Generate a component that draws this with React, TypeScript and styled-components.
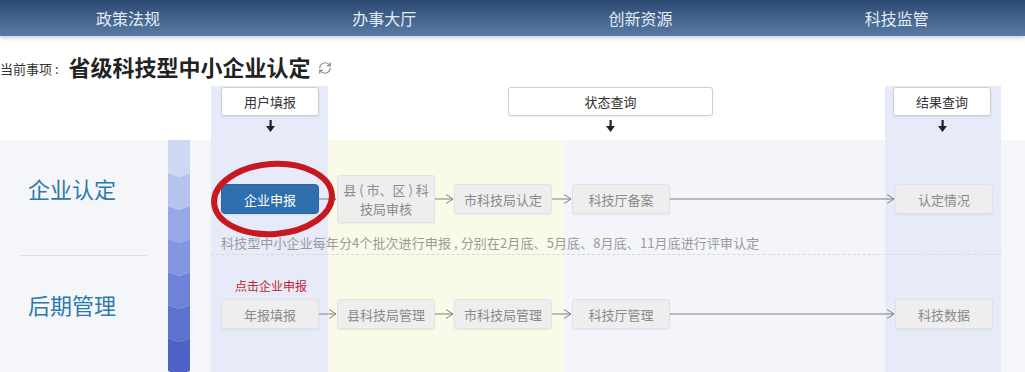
import React from "react"
import styled, { createGlobalStyle } from "styled-components"
import { RefreshCw } from "lucide-react"

const GlobalStyle = createGlobalStyle`
        html, body {
                margin: 0;
                padding: 0;
                background: #ffffff;
        }

        body {
                font-family: "Microsoft YaHei", "Noto Sans CJK SC", "Noto Sans", sans-serif;
                color: #333;
                overflow: hidden;
        }
`;

const Page = styled.div`
        width: 1025px;
        height: 372px;
        overflow: hidden;
`;

const TopBar = styled.nav`
        display: grid;
        grid-template-columns: repeat(4, 1fr);
        height: 36px;
        background: linear-gradient(#2c4a72, #5a7aa5);
        box-shadow: 0 2px 4px rgba(40, 60, 90, 0.25);
        position: relative;
        z-index: 2;
`;

const NavItem = styled.a`
        display: flex;
        align-items: center;
        justify-content: center;
        font-size: 16px;
        color: #e2ebf6;
        text-decoration: none;
`;

const TitleRow = styled.div`
        display: flex;
        align-items: center;
        height: 50px;
        padding-top: 10px;
        box-sizing: border-box;
`;

const TitleLabel = styled.span`
        font-size: 13px;
        color: #333;
        margin-top: 4px;
        white-space: pre;
`;

const Title = styled.h1`
        margin: 0 8px 0 7px;
        font-size: 22px;
        line-height: 26px;
        font-weight: bold;
        color: #222;
`;

const RefreshIcon = styled(RefreshCw)`
        color: #8a8a8a;
        margin-top: 4px;
`;

const HeadRow = styled.div`
        display: grid;
        grid-template-columns: 221px 98px 189px 205px 180px 98px;
        height: 54px;
        background: linear-gradient(to right,
                #ffffff 0 211px,
                #e7eaf8 211px 328px,
                #ffffff 328px 885px,
                #e7eaf8 885px 1001px,
                #ffffff 1001px);
`;

const HeadCell = styled.div<{ $col: number }>`
        grid-column: ${props => props.$col};
        display: flex;
        flex-direction: column;
        align-items: center;
        gap: 4px;
        padding-top: 1px;
`;

const HeadBox = styled.div`
        width: 100%;
        height: 29px;
        box-sizing: border-box;
        display: flex;
        align-items: center;
        justify-content: center;
        background: #fff;
        border: 1px solid #cfcfcf;
        border-radius: 3px;
        box-shadow: 0 1px 2px rgba(0, 0, 0, 0.08);
        font-size: 13px;
        color: #333;
`;

const Body = styled.div`
        display: flex;
        height: 232px;
        background: #f5f6fa;
`;

const Side = styled.aside`
        width: 150px;
        display: flex;
        flex-direction: column;
`;

const SideBlock = styled.div<{ $height: number }>`
        height: ${props => props.$height}px;
        padding: 33px 0 0 28px;
        box-sizing: border-box;
        font-size: 22px;
        line-height: 30px;
        color: #2b7aa8;
`;

const SideDivider = styled.div`
        margin-left: 20px;
        width: 127px;
        height: 1px;
        background: #dde0e7;
`;

const Strip = styled.div`
        margin-left: 18px;
        width: 22px;
        display: flex;
        flex-direction: column;
`;

const Segment = styled.div<{ $color: string; $first?: boolean }>`
        height: 37px;
        margin-bottom: -4px;
        background: ${props => props.$color};
        clip-path: ${props => props.$first
                ? "polygon(0 0, 100% 0, 100% 33px, 50% 37px, 0 33px)"
                : "polygon(0 0, 50% 4px, 100% 0, 100% 33px, 50% 37px, 0 33px)"};
`;

const Flow = styled.div`
        flex: 1;
        display: flex;
        flex-direction: column;
        background: linear-gradient(to right,
                #f5f6fa 0 21px,
                #e7eaf8 21px 138px,
                #fafae9 138px 373px,
                #f4f5fa 373px 695px,
                #e7eaf8 695px 811px,
                #f5f6fa 811px);
`;

const FlowRow = styled.div<{ $height: number; $divided?: boolean }>`
        margin-left: 21px;
        width: 790px;
        height: ${props => props.$height}px;
        box-sizing: border-box;
        border-bottom: ${props => props.$divided ? "1px dashed #d6d8de" : "none"};
        padding-left: 10px;
`;

const Steps = styled.div<{ $top: number; $height: number }>`
        display: flex;
        align-items: center;
        margin-top: ${props => props.$top}px;
        height: ${props => props.$height}px;
`;

const StepWrap = styled.div`
        position: relative;
`;

const Step = styled.div<{ $active?: boolean; $tall?: boolean }>`
        width: 98px;
        height: ${props => props.$tall ? 48 : 30}px;
        box-sizing: border-box;
        display: flex;
        align-items: center;
        justify-content: center;
        text-align: center;
        padding: 0 2px;
        font-size: 13px;
        line-height: 19px;
        white-space: nowrap;
        border-radius: ${props => props.$active ? 4 : 3}px;
        background: ${props => props.$active ? "#2f6fad" : "#eeeeee"};
        border: 1px solid ${props => props.$active ? "#2c67a2" : "#e2e2e2"};
        color: ${props => props.$active ? "#ffffff" : "#8a8a8a"};
        box-shadow: 0 1px 2px rgba(0, 0, 0, 0.06);
`;

const Circle = styled.svg`
        position: absolute;
        left: -11px;
        top: -24px;
        width: 126px;
        height: 78px;
        overflow: visible;
        pointer-events: none;
`;

const Note = styled.p`
        margin: 11px 0 0;
        font-size: 13px;
        line-height: 18px;
        letter-spacing: 0.1px;
        color: #9a9a9a;
        white-space: nowrap;
`;

const Hint = styled.div`
        margin: 23px 0 0 14px;
        font-size: 12px;
        line-height: 16px;
        color: #c0262d;
`;

const DownArrow = () => (
        <svg width="9" height="12" viewBox="0 0 9 12">
                <rect x="3.5" y="0" width="2.2" height="7" fill="#222" />
                <polygon points="0,6 9,6 4.5,12" fill="#222" />
        </svg>
)

const Connector = ({ width }: { width: number }) => (
        <svg width={width} height="12" viewBox={`0 0 ${width} 12`}>
                <line x1="0" y1="6" x2={width - 1} y2="6" stroke="#7d7f88" strokeWidth="1" />
                <polyline points={`${width - 8},1.5 ${width - 1},6 ${width - 8},10.5`} fill="none" stroke="#7d7f88" strokeWidth="1" />
        </svg>
)

const navs = ["政策法规", "办事大厅", "创新资源", "科技监管"];
const stripColors = ["#cfd8f3", "#b6c3ee", "#97a8e6", "#8396df", "#6e83d7", "#5d71cf", "#4d61c6"];

const App: React.FunctionComponent = () => {

        return (
                <Page>
                        <GlobalStyle />
                        <TopBar>
                                {navs.map(n => <NavItem key={n}>{n}</NavItem>)}
                        </TopBar>
                        <TitleRow>
                                <TitleLabel>当前事项 : </TitleLabel>
                                <Title>省级科技型中小企业认定</Title>
                                <RefreshIcon size={14} strokeWidth={2} />
                        </TitleRow>
                        <HeadRow>
                                <HeadCell $col={2}>
                                        <HeadBox>用户填报</HeadBox>
                                        <DownArrow />
                                </HeadCell>
                                <HeadCell $col={4}>
                                        <HeadBox>状态查询</HeadBox>
                                        <DownArrow />
                                </HeadCell>
                                <HeadCell $col={6}>
                                        <HeadBox>结果查询</HeadBox>
                                        <DownArrow />
                                </HeadCell>
                        </HeadRow>
                        <Body>
                                <Side>
                                        <SideBlock $height={115}>企业认定</SideBlock>
                                        <SideDivider />
                                        <SideBlock $height={116}>后期管理</SideBlock>
                                </Side>
                                <Strip>
                                        {stripColors.map((c, i) => <Segment key={c} $color={c} $first={i === 0} />)}
                                </Strip>
                                <Flow>
                                        <FlowRow $height={115} $divided>
                                                <Steps $top={35} $height={48}>
                                                        <StepWrap>
                                                                <Step $active>企业申报</Step>
                                                                <Circle viewBox="0 0 126 78">
                                                                        <ellipse cx="63" cy="39" rx="59" ry="35" fill="none" stroke="#c8181f" strokeWidth="6" transform="rotate(-4 63 39)" />
                                                                </Circle>
                                                        </StepWrap>
                                                        <Connector width={18} />
                                                        <Step $tall>县 ( 市、区 ) 科<br />技局审核</Step>
                                                        <Connector width={19} />
                                                        <Step>市科技局认定</Step>
                                                        <Connector width={20} />
                                                        <Step>科技厅备案</Step>
                                                        <Connector width={225} />
                                                        <Step>认定情况</Step>
                                                </Steps>
                                                <Note>科技型中小企业每年分4个批次进行申报 , 分别在2月底、5月底、8月底、11月底进行评审认定</Note>
                                        </FlowRow>
                                        <FlowRow $height={116}>
                                                <Hint>点击企业申报</Hint>
                                                <Steps $top={5} $height={30}>
                                                        <Step>年报填报</Step>
                                                        <Connector width={18} />
                                                        <Step>县科技局管理</Step>
                                                        <Connector width={19} />
                                                        <Step>市科技局管理</Step>
                                                        <Connector width={20} />
                                                        <Step>科技厅管理</Step>
                                                        <Connector width={225} />
                                                        <Step>科技数据</Step>
                                                </Steps>
                                        </FlowRow>
                                </Flow>
                        </Body>
                </Page>
        )
}

export default App;
